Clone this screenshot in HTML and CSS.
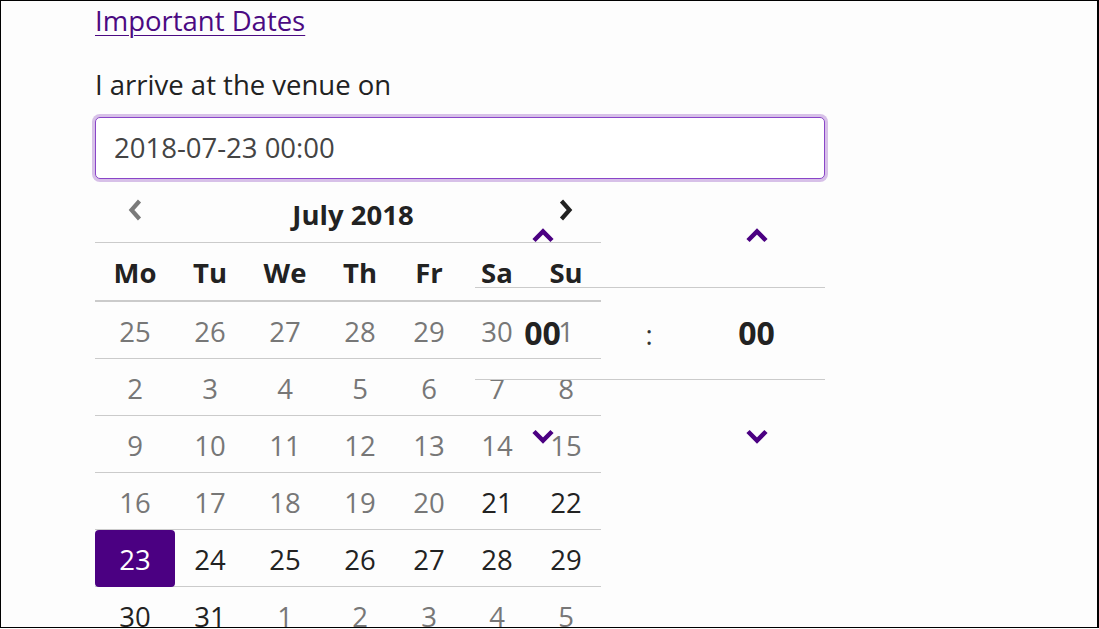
FILE: index.html
```html
<!DOCTYPE html>
<html lang="en">
<head>
<meta charset="utf-8">
<title>Important Dates</title>
<link rel="stylesheet" href="styles.css">
</head>
<body>
<div class="frame">
  <div class="content">
    <a class="link" href="#">Important Dates</a>
    <label class="label" for="arrive">I arrive at the venue on</label>
    <input class="input" id="arrive" type="text" value="2018-07-23 00:00">
    <div class="picker">
      <div class="calendar">
        <div class="head">
          <span class="nav prev"><svg width="16" height="24" viewBox="0 0 16 24"><path d="M12.5 3 L4.5 12 L12.5 21" fill="none" stroke="currentColor" stroke-width="4.2"/></svg></span>
          <span class="title">July 2018</span>
          <span class="nav next"><svg width="16" height="24" viewBox="0 0 16 24"><path d="M3.5 3 L11.5 12 L3.5 21" fill="none" stroke="currentColor" stroke-width="4.2"/></svg></span>
        </div>
        <div class="row dow">
          <span>Mo</span><span>Tu</span><span>We</span><span>Th</span><span>Fr</span><span>Sa</span><span>Su</span>
        </div>
        <div class="row">
          <span class="off">25</span><span class="off">26</span><span class="off">27</span><span class="off">28</span><span class="off">29</span><span class="off">30</span><span class="off">1</span>
        </div>
        <div class="row">
          <span class="off">2</span><span class="off">3</span><span class="off">4</span><span class="off">5</span><span class="off">6</span><span class="off">7</span><span class="off">8</span>
        </div>
        <div class="row">
          <span class="off">9</span><span class="off">10</span><span class="off">11</span><span class="off">12</span><span class="off">13</span><span class="off">14</span><span class="off">15</span>
        </div>
        <div class="row">
          <span class="off">16</span><span class="off">17</span><span class="off">18</span><span class="off">19</span><span class="off">20</span><span>21</span><span>22</span>
        </div>
        <div class="row">
          <span class="active">23</span><span>24</span><span>25</span><span>26</span><span>27</span><span>28</span><span>29</span>
        </div>
        <div class="row">
          <span>30</span><span>31</span><span class="off">1</span><span class="off">2</span><span class="off">3</span><span class="off">4</span><span class="off">5</span>
        </div>
      </div>
      <div class="time">
        <div class="trow up">
          <span class="arrow"><svg width="24" height="16" viewBox="0 0 24 16"><path d="M3 13.5 L12 4.5 L21 13.5" fill="none" stroke="currentColor" stroke-width="4.5"/></svg></span>
          <span></span>
          <span class="arrow"><svg width="24" height="16" viewBox="0 0 24 16"><path d="M3 13.5 L12 4.5 L21 13.5" fill="none" stroke="currentColor" stroke-width="4.5"/></svg></span>
        </div>
        <div class="trow value">
          <span class="num">00</span>
          <span class="colon">:</span>
          <span class="num">00</span>
        </div>
        <div class="trow down">
          <span class="arrow"><svg width="24" height="16" viewBox="0 0 24 16"><path d="M3 2.5 L12 11.5 L21 2.5" fill="none" stroke="currentColor" stroke-width="4.5"/></svg></span>
          <span></span>
          <span class="arrow"><svg width="24" height="16" viewBox="0 0 24 16"><path d="M3 2.5 L12 11.5 L21 2.5" fill="none" stroke="currentColor" stroke-width="4.5"/></svg></span>
        </div>
      </div>
    </div>
  </div>
</div>
</body>
</html>
```

FILE: styles.css
```css
html, body {
  margin: 0;
  padding: 0;
  background: #fdfdfd;
}

.frame {
  width: 1099px;
  height: 628px;
  box-sizing: border-box;
  border: 1px solid #000;
  border-right-width: 2px;
  overflow: hidden;
  background: #fdfdfd;
  font-family: "Open Sans", "Noto Sans", sans-serif;
  font-size: 27.5px;
  line-height: 40px;
  color: #222;
}

.content {
  width: 730px;
  padding-left: 94px;
  display: flex;
  flex-direction: column;
  align-items: flex-start;
}

.link {
  color: #4b0a82;
  text-decoration: underline;
  text-decoration-thickness: 1px;
  text-underline-offset: 4px;
}

.label {
  margin-top: 24px;
  color: #222;
}

.input {
  margin-top: 12px;
  width: 730px;
  height: 62px;
  box-sizing: border-box;
  padding: 0 18px 1px;
  border: 1px solid #8a45c8;
  border-radius: 5px;
  box-shadow: 0 0 0 3px #d7c0e8;
  background: #fff;
  font: inherit;
  color: #444;
  outline: none;
}

.picker {
  position: relative;
  margin-top: 7px;
  width: 730px;
}

.calendar {
  width: 506px;
}

.head {
  display: grid;
  grid-template-columns: 80px 356px 70px;
  height: 56px;
  align-items: center;
  border-bottom: 1px solid #cbcbcb;
}

.head .title {
  text-align: center;
  font-weight: 700;
  color: #222;
  padding-top: 2px;
}

.nav {
  display: flex;
  justify-content: center;
  height: 24px;
  margin-top: -8px;
}

.nav svg {
  display: block;
}

.prev {
  color: #7a7a7a;
}

.next {
  color: #222;
}

.row {
  display: grid;
  grid-template-columns: 80px 70px 80px 70px 68px 68px 70px;
  height: 56px;
  align-items: center;
  border-bottom: 1px solid #cbcbcb;
}

.row span {
  display: flex;
  align-items: center;
  justify-content: center;
  box-sizing: border-box;
  height: 56px;
  padding-top: 3px;
  color: #222;
}

.row.dow {
  height: 57px;
  border-bottom: 2px solid #cbcbcb;
}

.row.dow span {
  font-weight: 700;
  height: 57px;
}

.row span.off {
  color: #777;
}

.row span.active {
  background: #4b0082;
  color: #fff;
  border-radius: 4px;
  height: 57px;
  margin-top: 0;
  padding-top: 2px;
  align-self: start;
}

.time {
  position: absolute;
  top: -3px;
  left: 380px;
  width: 350px;
}

.trow {
  display: grid;
  grid-template-columns: 135px 78px 137px;
  align-items: center;
  justify-items: center;
}

.trow.up {
  height: 104px;
  border-bottom: 1px solid #cbcbcb;
}

.trow.value {
  height: 91px;
  border-bottom: 1px solid #cbcbcb;
}

.trow.down {
  height: 112px;
}

.arrow {
  color: #4b0082;
  display: flex;
}

.arrow svg {
  display: block;
}

.up .arrow {
  margin-top: -1px;
}

.down .arrow {
  margin-top: 2px;
}

.num {
  font-weight: 700;
  font-size: 32px;
  color: #222;
  margin-top: -2px;
}

.colon {
  color: #333;
  margin-top: 3px;
}
```
